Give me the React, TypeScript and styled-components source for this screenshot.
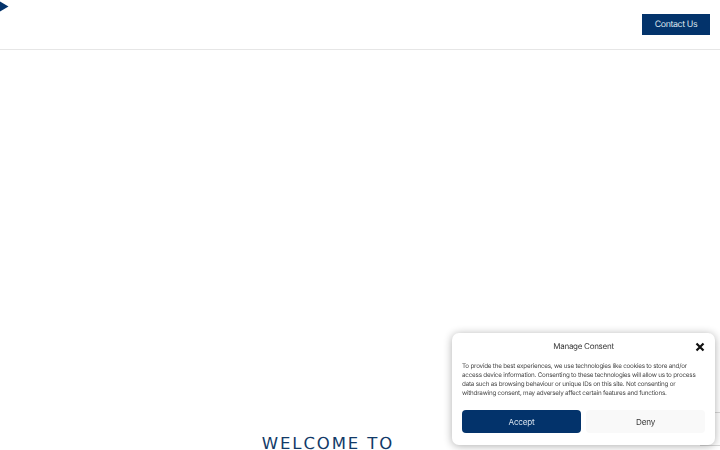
import React from 'react';
import styled, { createGlobalStyle } from 'styled-components';

const GlobalStyle = createGlobalStyle`
    html, body {
        margin: 0;
        height: 100%;
        overflow: hidden;
        background: #fff;
        font-family: 'Inter', 'Liberation Sans', sans-serif;
        text-rendering: geometricPrecision;
    }
`;

// header
const Header = styled.header`
    height: 49px;
    display: flex;
    align-items: flex-start;
    justify-content: space-between;
    padding-right: 10px;
    border-bottom: 1px solid #e6e6e6;
`;

const Logo = styled.svg`
    display: block;
    width: 9px;
    height: 12px;
`;

const ContactButton = styled.a`
    margin-top: 14px;
    width: 68px;
    height: 21px;
    display: flex;
    align-items: center;
    justify-content: center;
    background: #03336b;
    color: #dfe7f0;
    font-size: 8.8px;
    letter-spacing: -0.4px;
`;

// hero
const Hero = styled.main`
    padding-top: 384px;
    padding-right: 64px;
    text-align: center;
`;

const Welcome = styled.h1`
    margin: 0;
    font-family: 'DejaVu Sans', sans-serif;
    font-weight: 400;
    font-size: 16.5px;
    line-height: 20px;
    letter-spacing: 1.9px;
    color: #123a68;
`;

// recaptcha badge behind the dialog
const Badge = styled.div`
    position: fixed;
    right: 0;
    top: 412px;
    width: 20px;
    height: 32px;
    border-top: 1px solid #d8d8d8;
    border-bottom: 1px solid #d8d8d8;
`;

// consent dialog
const Dialog = styled.section`
    position: fixed;
    left: 452px;
    top: 333px;
    width: 263px;
    height: 112px;
    box-sizing: border-box;
    padding: 0 10px;
    background: #fff;
    border-radius: 7px;
    box-shadow: 0 1px 8px rgba(0, 0, 0, 0.32);
`;

const DialogHead = styled.div`
    position: relative;
    padding-top: 8px;
    line-height: 10px;
    text-align: center;
    font-size: 8px;
    letter-spacing: -0.28px;
    color: #3a3a3a;
`;

const Close = styled.svg`
    position: absolute;
    right: 0;
    top: 9px;
    width: 10px;
    height: 10px;
`;

const Message = styled.p`
    margin: 11px 0 0;
    font-size: 6.3px;
    letter-spacing: -0.22px;
    line-height: 9px;
    color: #4a4a4a;
`;

const MessageLine = styled.span`
    display: block;
    white-space: nowrap;
`;

const Buttons = styled.div`
    display: grid;
    grid-template-columns: 119px 119px;
    justify-content: space-between;
    margin-top: 12px;
`;

const ConsentButton = styled.button<{ $primary?: boolean }>`
    height: 23px;
    padding: 0;
    border: 0;
    border-radius: 4px;
    font-family: inherit;
    font-size: 8.2px;
    letter-spacing: -0.25px;
    background: ${(p) => (p.$primary ? '#03336b' : '#f9f9f9')};
    color: ${(p) => (p.$primary ? '#d5e0ec' : '#3a3a3a')};
`;

const messageLines = [
    'To provide the best experiences, we use technologies like cookies to store and/or',
    'access device information. Consenting to these technologies will allow us to process',
    'data such as browsing behaviour or unique IDs on this site. Not consenting or',
    'withdrawing consent, may adversely affect certain features and functions.',
];

export default function App() {
    return (
        <>
            <GlobalStyle />
            <Header>
                <Logo viewBox="0 0 9 12">
                    <path d="M0 1.5 L8.5 6.5 L0 11.5 Z" fill="#03336b" />
                </Logo>
                <ContactButton>Contact Us</ContactButton>
            </Header>
            <Hero>
                <Welcome>WELCOME TO</Welcome>
            </Hero>
            <Badge />
            <Dialog>
                <DialogHead>
                    Manage Consent
                    <Close viewBox="0 0 10 10">
                        <path d="M1.5 1.5 L8.5 8.5 M8.5 1.5 L1.5 8.5" stroke="#111" strokeWidth="2.2" />
                    </Close>
                </DialogHead>
                <Message>
                    {messageLines.map((line) => (
                        <MessageLine key={line}>{line}</MessageLine>
                    ))}
                </Message>
                <Buttons>
                    <ConsentButton $primary>Accept</ConsentButton>
                    <ConsentButton>Deny</ConsentButton>
                </Buttons>
            </Dialog>
        </>
    );
}
